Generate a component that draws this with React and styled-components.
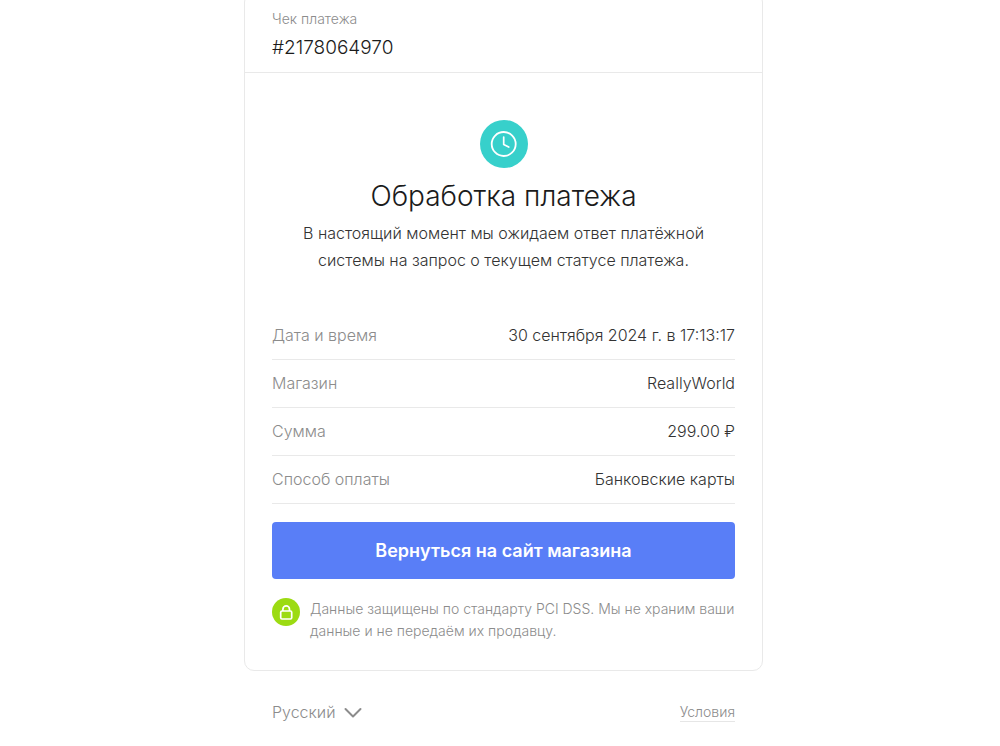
import React from 'react';
import styled, { createGlobalStyle } from 'styled-components';

const GlobalStyle = createGlobalStyle`
  * {
    box-sizing: border-box;
  }

  body {
    margin: 0;
    background: #fff;
    color: #1b1b1b;
    font-family: Inter, 'Noto Sans', sans-serif;
    font-weight: 300;
  }
`

const Page = styled.main`
  padding-left: 7px;
  overflow: hidden;
`

const Column = styled.div`
  width: 100%;
  max-width: 519px;
  margin: -8px auto 0;
`

const Card = styled.section`
  border: 1px solid #e9e9e9;
  border-radius: 10px;
`

const CardHeader = styled.header`
  padding: 16px 27px 8px;
  border-bottom: 1px solid #e9e9e9;
`

const HeaderLabel = styled.div`
  font-size: 14px;
  line-height: 20px;
  color: #8c8c8c;
`

const HeaderNumber = styled.div`
  padding-top: 3px;
  font-size: 19px;
  line-height: 32px;
`

const CardBody = styled.div`
  padding: 47px 27px 28px;
`

const Status = styled.div`
  display: flex;
  flex-direction: column;
  align-items: center;
  text-align: center;
`

const StatusIcon = styled.div`
  display: flex;
  width: 48px;
  height: 48px;
  border-radius: 50%;
  background: #37d0cb;
`

const Title = styled.h1`
  margin: 8px 0 4px;
  font-size: 28px;
  line-height: 40px;
  font-weight: 300;
`

const Description = styled.p`
  margin: 0;
  max-width: 420px;
  font-size: 16px;
  line-height: 27px;
  color: #333;
`

const Details = styled.dl`
  margin: 38px 0 0;
`

const Row = styled.div`
  display: flex;
  justify-content: space-between;
  padding: 10px 0;
  border-bottom: 1px solid #e9e9e9;
  font-size: 16px;
  line-height: 27px;
`

const RowLabel = styled.dt`
  color: #8c8c8c;
`

const RowValue = styled.dd`
  margin: 0;
  color: #333;
`

const BackButton = styled.button`
  display: block;
  width: 100%;
  height: 57px;
  margin-top: 18px;
  padding: 0;
  border: 0;
  border-radius: 4px;
  background: #597ef7;
  color: #fff;
  font-family: inherit;
  font-size: 18px;
  font-weight: 600;
  cursor: pointer;
`

const Security = styled.div`
  display: flex;
  gap: 10px;
  margin-top: 19px;
`

const SecurityIcon = styled.div`
  display: flex;
  flex-shrink: 0;
  width: 28px;
  height: 28px;
  border-radius: 50%;
  background: #9cdb12;
`

const SecurityText = styled.p`
  margin: 0;
  font-size: 14px;
  line-height: 22px;
  color: #8c8c8c;
`

const Footer = styled.footer`
  display: flex;
  align-items: center;
  justify-content: space-between;
  padding: 28px 28px 20px;
`

const Language = styled.label`
  display: flex;
  align-items: center;
  gap: 8px;
`

const LanguageSelect = styled.select`
  appearance: none;
  padding: 0;
  border: 0;
  background: none;
  color: #8c8c8c;
  font-family: inherit;
  font-size: 16px;
  font-weight: 300;
  line-height: 27px;
  cursor: pointer;
`

const TermsLink = styled.a`
  border-bottom: 1px solid #e6e6e6;
  color: #8c8c8c;
  font-size: 14px;
  line-height: 18px;
  text-decoration: none;
`

const details = [
  { label: 'Дата и время', value: '30 сентября 2024 г. в 17:13:17' },
  { label: 'Магазин', value: 'ReallyWorld' },
  { label: 'Сумма', value: '299.00 ₽' },
  { label: 'Способ оплаты', value: 'Банковские карты' },
]

function ClockIcon() {
  return (
    <svg width="48" height="48" viewBox="0 0 48 48" fill="none" stroke="#fff" strokeLinecap="round" strokeLinejoin="round">
      <circle cx="23.7" cy="24" r="12" strokeWidth="1.8" />
      <path d="M23.7 17v7.5l5 2.5" strokeWidth="1.7" />
    </svg>
  )
}

function LockIcon() {
  return (
    <svg width="28" height="28" viewBox="0 0 28 28" fill="none" stroke="#fff" strokeWidth="1.7" strokeLinejoin="round">
      <rect x="8.7" y="13" width="11" height="8" rx="1.3" />
      <path d="M10.9 13v-1.8a3.3 3.3 0 0 1 6.6 0V13" />
    </svg>
  )
}

function ChevronIcon() {
  return (
    <svg width="18" height="12" viewBox="0 0 18 12" fill="none" stroke="#8c8c8c" strokeWidth="2" strokeLinecap="round" strokeLinejoin="round">
      <path d="M1.5 2L9 9.5L16.5 2" />
    </svg>
  )
}

function App() {
  return (
    <Page>
      <GlobalStyle />
      <Column>
        <Card>
          <CardHeader>
            <HeaderLabel>Чек платежа</HeaderLabel>
            <HeaderNumber>#2178064970</HeaderNumber>
          </CardHeader>
          <CardBody>
            <Status>
              <StatusIcon>
                <ClockIcon />
              </StatusIcon>
              <Title>Обработка платежа</Title>
              <Description>
                В настоящий момент мы ожидаем ответ платёжной
                системы на запрос о текущем статусе платежа.
              </Description>
            </Status>
            <Details>
              {details.map((item) => (
                <Row key={item.label}>
                  <RowLabel>{item.label}</RowLabel>
                  <RowValue>{item.value}</RowValue>
                </Row>
              ))}
            </Details>
            <BackButton type="button">Вернуться на сайт магазина</BackButton>
            <Security>
              <SecurityIcon>
                <LockIcon />
              </SecurityIcon>
              <SecurityText>
                Данные защищены по стандарту PCI DSS. Мы не храним ваши
                данные и не передаём их продавцу.
              </SecurityText>
            </Security>
          </CardBody>
        </Card>
        <Footer>
          <Language>
            <LanguageSelect aria-label="Язык" defaultValue="ru">
              <option value="ru">Русский</option>
              <option value="en">English</option>
            </LanguageSelect>
            <ChevronIcon />
          </Language>
          <TermsLink href="#terms">Условия</TermsLink>
        </Footer>
      </Column>
    </Page>
  )
}

export default App
